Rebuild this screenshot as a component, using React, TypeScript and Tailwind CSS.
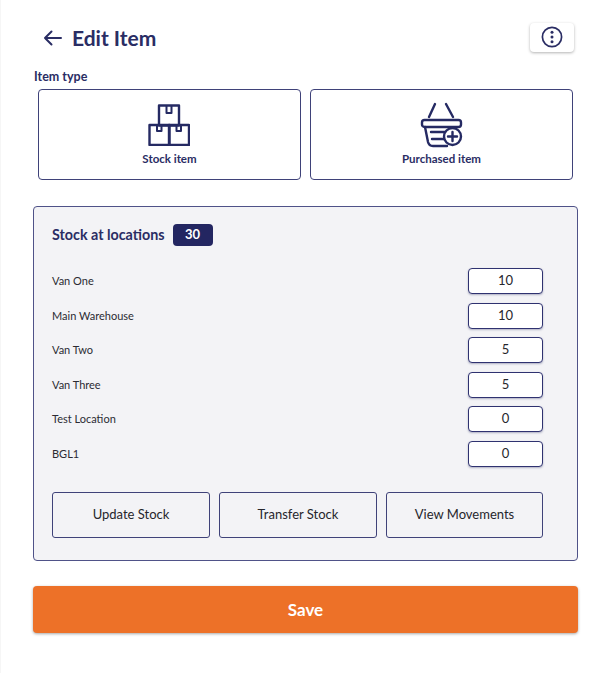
function Boxes() {
  return (
    <svg width="42" height="42" viewBox="0 0 42 42" fill="none" stroke="#252a63" strokeWidth="2.4" strokeLinejoin="round">
      <rect x="11" y="1.5" width="20" height="20" />
      <rect x="1.5" y="21" width="20" height="20" />
      <rect x="21" y="21" width="20" height="20" />
      <path d="M18.5 2v7h5V2M9 21v6h4.5v-6M28.5 21v6H33v-6" strokeWidth="2" />
    </svg>
  );
}

function Basket() {
  return (
    <svg width="44" height="46" viewBox="0 0 44 46" fill="none" stroke="#252a63" strokeWidth="2.4" strokeLinecap="round" strokeLinejoin="round">
      <path d="M15 2 9 15M26 2l7 13" />
      <rect x="2" y="18" width="39" height="7" rx="2.5" />
      <path d="M5 25l3 15q1 4 5 4h14" />
      <path d="M11 30h15M12 37h14" />
      <circle cx="32.5" cy="34.5" r="8.5" fill="#fff" />
      <path d="M32.5 30v9M28 34.5h9" />
    </svg>
  );
}

function Dots() {
  return (
    <svg width="22" height="22" viewBox="0 0 22 22" fill="none">
      <circle cx="11" cy="11" r="9.6" stroke="#2a2d64" strokeWidth="1.7" />
      <circle cx="11" cy="6.2" r="1.5" fill="#2a2d64" />
      <circle cx="11" cy="11" r="1.5" fill="#2a2d64" />
      <circle cx="11" cy="15.8" r="1.5" fill="#2a2d64" />
    </svg>
  );
}

function TypeCard({ icon, label, iconBox }: { icon: React.ReactNode; label: string; iconBox: string }) {
  return (
    <div className="flex h-[91px] flex-1 flex-col items-center rounded-[4px] border border-[#3f4279] bg-white pt-[13px]">
      <div className={iconBox}>{icon}</div>
      <span className="mt-auto mb-[13px] text-[11.5px] leading-[14px] font-bold text-[#2a2d64]">{label}</span>
    </div>
  );
}

const rows: [string, string][] = [
  ["Van One", "10"],
  ["Main Warehouse", "10"],
  ["Van Two", "5"],
  ["Van Three", "5"],
  ["Test Location", "0"],
  ["BGL1", "0"],
];

export default function App() {
  return (
    <div className="h-[673px] w-[604px] bg-white font-['Lato',sans-serif] text-[#2a2d64] shadow-[inset_1px_0_0_#f6f6f6]">
      <div className="flex h-[68px] items-center pr-[30px] pl-[43px] pt-[7px]">
        <svg width="19" height="16" viewBox="0 0 19 16" fill="none" stroke="#2a2d64" strokeWidth="2" strokeLinecap="round" strokeLinejoin="round">
          <path d="M18 8H2M8.5 1.5 2 8l6.5 6.5" />
        </svg>
        <h1 className="ml-[10px] -mt-[1px] text-[21px] leading-none font-bold">Edit Item</h1>
        <button className="ml-auto -mt-[1px] flex h-[29px] w-[44px] items-center justify-center rounded-[4px] bg-white shadow-[0_1px_3px_rgba(0,0,0,0.3)]">
          <Dots />
        </button>
      </div>
      <div className="pl-[34px] pt-[1px] text-[12.5px] leading-[16px] font-bold">Item type</div>
      <div className="mt-[4px] flex gap-[9px] pr-[31px] pl-[38px]">
        <TypeCard icon={<Boxes />} label="Stock item" iconBox="mt-[1px] -ml-[2px]" />
        <TypeCard icon={<Basket />} label="Purchased item" iconBox="-mt-[1px]" />
      </div>
      <section className="mr-[26px] ml-[33px] mt-[26px] h-[355px] rounded-[4px] border border-[#4f5288] bg-[#f3f3f6] px-[18px] pt-[17px]">
        <div className="flex items-center">
          <h2 className="text-[14.3px] leading-[22px] font-bold">Stock at locations</h2>
          <span className="ml-[8px] flex h-[22px] w-[40px] items-center justify-center rounded-[4px] bg-[#232661] text-[13px] font-bold text-white">30</span>
        </div>
        <div className="mt-[22px] flex flex-col gap-[8.5px]">
          {rows.map(([name, value]) => (
            <div key={name} className="flex h-[26px] items-center justify-between pr-[16px]">
              <span className="pt-[1px] text-[11px] text-[#2b2b33]">{name}</span>
              <div className="flex h-[26px] w-[75px] items-center justify-center rounded-[4px] border border-[#2f3270] bg-white text-[13px] text-[#26262c] shadow-[0_1px_2px_rgba(42,45,100,0.35)]">
                {value}
              </div>
            </div>
          ))}
        </div>
        <div className="mt-[25px] grid grid-cols-[158px_158px_157px] gap-[9px]">
          {["Update Stock", "Transfer Stock", "View Movements"].map((t) => (
            <button key={t} className="h-[46px] rounded-[3px] border border-[#3f4279] pt-[1px] text-[13px] text-[#26262c]">
              {t}
            </button>
          ))}
        </div>
      </section>
      <button className="ml-[33px] mt-[25px] flex h-[47px] w-[545px] items-center justify-center rounded-[4px] bg-[#ed7128] text-[17px] font-bold text-white shadow-[0_1px_3px_rgba(0,0,0,0.35)]">
        Save
      </button>
    </div>
  );
}
